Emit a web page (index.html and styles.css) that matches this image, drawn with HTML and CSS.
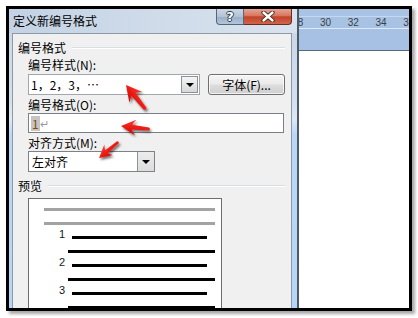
FILE: index.html
```html
<!DOCTYPE html>
<html lang="zh-CN">
<head>
  <meta charset="UTF-8" />
  <title>定义新编号格式</title>
  <link rel="stylesheet" href="styles.css">
</head>
<body>

<div class="shot">
  <div class="dialog">
    <div class="titlebar">
      <span class="title">定义新编号格式</span>
      <div class="caps">
        <span class="cap help">?</span>
        <span class="cap close">
          <svg width="14" height="11" viewBox="0 0 14 11">
            <path d="M2.5 1.5 L11.5 9.5 M11.5 1.5 L2.5 9.5" stroke="#3a2520" stroke-width="4.2" stroke-linecap="round"/>
            <path d="M2.5 1.5 L11.5 9.5 M11.5 1.5 L2.5 9.5" stroke="#fff" stroke-width="2.4" stroke-linecap="round"/>
          </svg>
        </span>
      </div>
    </div>

    <div class="client">
      <div class="group-title">编号格式</div>
      <div class="fields">
        <div class="label">编号样式(N):</div>
        <div class="row">
          <div class="combo style-combo">
            <span class="combo-text">1，2，3，…</span>
            <span class="drop"></span>
          </div>
          <div class="btn">字体(F)...</div>
        </div>

        <div class="label">编号格式(O):</div>
        <div class="textbox"><span class="hl">1</span><span class="ret">↵</span></div>

        <div class="label">对齐方式(M):</div>
        <div class="combo align-combo">
          <span class="combo-text">左对齐</span>
          <span class="drop edge"></span>
        </div>
      </div>

      <div class="group-title preview-title">预览</div>
      <div class="preview">
        <div class="pv-line gray"></div>
        <div class="pv-line gray"></div>
        <div class="pv-row"><span class="pv-num">1</span><span class="pv-line first"></span></div>
        <div class="pv-line rest"></div>
        <div class="pv-row"><span class="pv-num">2</span><span class="pv-line first"></span></div>
        <div class="pv-line rest"></div>
        <div class="pv-row"><span class="pv-num">3</span><span class="pv-line first"></span></div>
        <div class="pv-line rest"></div>
      </div>
    </div>
  </div>

  <div class="word">
    <div class="ruler-top"></div>
    <div class="ruler">
      <span>28</span><span>30</span><span>32</span><span>34</span><span>36</span>
    </div>
    <div class="ruler-bottom"></div>
    <div class="page"></div>
  </div>
</div>

<!-- 红色标注箭头 -->
<svg class="marks" width="418" height="318" viewBox="0 0 418 318">
  <defs>
    <filter id="shadow" x="-50%" y="-50%" width="200%" height="200%">
      <feDropShadow dx="1.5" dy="2" stdDeviation="1.3" flood-color="#000" flood-opacity="0.55"/>
    </filter>
    <linearGradient id="red" x1="0" y1="0" x2="0" y2="1">
      <stop offset="0" stop-color="#ff3a2a"/>
      <stop offset="1" stop-color="#d80000"/>
    </linearGradient>
    <path id="arrow" d="M0,0 L15,-8 Q12,-4.2 11.5,-2.4 L29,-1.5 Q31,0 29,1.7 L11.5,2.4 Q12,4.2 15,8 Z"/>
  </defs>
  <g filter="url(#shadow)" fill="url(#red)">
    <use href="#arrow" transform="translate(126 85) rotate(51) scale(1.05)"/>
    <use href="#arrow" transform="translate(121 126) rotate(6) scale(0.97)"/>
    <use href="#arrow" transform="translate(99 158) rotate(-40) scale(0.85)"/>
  </g>
</svg>

</body>
</html>
```

FILE: styles.css
```css
* {
  box-sizing: border-box;
}
body {
  margin: 0;
  position: relative;
  width: 418px;
  height: 318px;
  overflow: hidden;
  background: #fff;
  font-family: "Noto Sans CJK SC", "Liberation Sans", sans-serif;
  font-size: 12px;
  color: #000;
}

/* 截图外框 */
.shot {
  margin: 6px 0 0 6px;
  width: 406px;
  height: 305px;
  border: 3px solid #000;
  box-shadow: 3px 3px 3px rgba(0,0,0,0.35);
  display: flex;
  overflow: hidden;
}

/* 对话框 */
.dialog {
  width: 288px;
  flex: none;
  display: flex;
  flex-direction: column;
  padding: 0 5px 0 3px;
  background: linear-gradient(180deg, #c7d5e6 0, #d3dfec 90px, #dce8f4 110px, #b9d8f7 125px, #b6d6f7 100%);
}
.titlebar {
  height: 24px;
  flex: none;
  display: flex;
  align-items: center;
  background: linear-gradient(90deg, #c3d2e4 0, #cfdbe9 50%, #d9e3ef 100%);
  margin: 0 -5px 0 -3px;
  padding-left: 4px;
  padding-right: 5px;
}
.title {
  line-height: 14px;
}
.caps {
  margin-left: auto;
  align-self: flex-start;
  display: flex;
  height: 16px;
}
.cap {
  display: flex;
  align-items: center;
  justify-content: center;
  height: 16px;
}
.help {
  width: 28px;
  border: 1px solid #56667b;
  border-top: none;
  border-radius: 0 0 0 4px;
  background: linear-gradient(180deg, #cad6e4 0, #b3c3d6 50%, #98aec6 51%, #b2c5da 100%);
  font-family: "DejaVu Sans", sans-serif;
  font-weight: bold;
  font-size: 13px;
  color: #fff;
  text-shadow: 1px 0 0 #2d3b4d, -1px 0 0 #2d3b4d, 0 1px 0 #2d3b4d, 0 -1px 0 #2d3b4d;
}
.close {
  width: 48px;
  border: 1px solid #6e2c20;
  border-top: none;
  border-left: none;
  border-radius: 0 0 4px 0;
  background: linear-gradient(180deg, #e6a595 0, #d8765f 45%, #c2432a 52%, #d0644a 100%);
}

/* 客户区 */
.client {
  flex: 1;
  background: #f0f0f0;
  border: 1px solid #8e99a7;
  border-bottom: none;
  padding: 7px 6px 0 5px;
  overflow: hidden;
}
.group-title {
  display: flex;
  align-items: center;
  gap: 6px;
  line-height: 14px;
}
.group-title::after {
  content: "";
  flex: 1;
  border-top: 1px solid #d5dfe5;
  border-bottom: 1px solid #fff;
}
.fields {
  padding-left: 10px;
}
.label {
  margin-top: 3px;
  line-height: 14px;
}
.row {
  display: flex;
  gap: 8px;
  margin-top: 2px;
}
.combo {
  height: 21px;
  display: flex;
  align-items: center;
  background: #fff;
  border: 1px solid #a2a7ae;
  padding: 0 1px 0 2px;
}
.style-combo {
  width: 172px;
}
.combo-text {
  flex: 1;
  line-height: 14px;
}
.drop {
  width: 17px;
  height: 17px;
  border: 1px solid #8d9299;
  background: linear-gradient(180deg, #f6f6f6 0, #e6e6e6 50%, #d8d8d8 100%);
  position: relative;
}
.drop::after {
  content: "";
  position: absolute;
  left: 4px;
  top: 6px;
  border-left: 4px solid transparent;
  border-right: 4px solid transparent;
  border-top: 4px solid #000;
}
.btn {
  width: 77px;
  height: 21px;
  border: 1px solid #707070;
  border-radius: 3px;
  background: linear-gradient(180deg, #f4f4f4 0, #ebebeb 48%, #dddddd 52%, #cfcfcf 100%);
  box-shadow: inset 0 0 0 1px rgba(255,255,255,0.7);
  display: flex;
  align-items: center;
  justify-content: center;
  line-height: 14px;
}
.textbox {
  margin-top: 1px;
  width: 256px;
  height: 20px;
  border: 1px solid #7b8088;
  background: #fff;
  display: flex;
  align-items: center;
  padding-left: 2px;
  line-height: 15px;
}
.hl {
  background: #c4c4c4;
  color: #8e4a00;
  padding: 0 1px;
}
.ret {
  color: #9a9a9a;
  font-size: 11px;
}
.align-combo {
  margin-top: 1px;
  width: 127px;
  border-color: #7d8188;
  padding: 0 0 0 3px;
}
.drop.edge {
  height: 19px;
  width: 17px;
  border: none;
  border-left: 1px solid #8d9299;
  background: linear-gradient(180deg, #ececec 0, #dcdcdc 100%);
}
.drop.edge::after {
  left: 4px;
  top: 8px;
}

/* 预览 */
.preview-title {
  margin-top: 7px;
}
.preview {
  margin: 5px 0 0 10px;
  width: 194px;
  height: 140px;
  border: 1px solid #6e6e6e;
  border-bottom: none;
  background: #fff;
  display: flex;
  flex-direction: column;
  gap: 11px;
  padding-top: 9px;
}
.pv-line {
  height: 3px;
  background: #000;
  flex: none;
}
.pv-line.gray {
  margin-left: 15px;
  width: 171px;
  background: #a3a3a3;
}
.pv-row {
  display: flex;
  align-items: flex-end;
  height: 9px;
  margin-top: -6px;
}
.pv-num {
  width: 36px;
  text-align: right;
  font-family: "Liberation Sans", sans-serif;
  font-size: 11px;
  line-height: 9px;
  color: #101828;
}
.pv-line.first {
  margin-left: 7px;
  width: 135px;
}
.pv-line.rest {
  margin-left: 39px;
  width: 147px;
}

/* Word 窗口 */
.word {
  flex: 1;
  display: flex;
  flex-direction: column;
  border-left: 2px solid #4e5a68;
}
.ruler-top {
  height: 7px;
  background: #a8c3e4;
}
.ruler {
  height: 13px;
  display: flex;
  background: #a7c2e3;
  border-top: 1px solid #c6d8ef;
  border-bottom: 1px solid #dfe9f6;
  overflow: hidden;
  font-family: "Liberation Sans", sans-serif;
  font-size: 10px;
  line-height: 11px;
  color: #3a3f46;
}
.ruler span {
  flex: none;
  width: 27.75px;
  text-align: center;
}
.ruler span:first-child {
  margin-left: -15px;
}
.ruler-bottom {
  height: 22px;
  background: #a6c1e3;
  border-bottom: 1px solid #5b6878;
}
.page {
  flex: 1;
  background: #fff;
}

/* 标注 */
.marks {
  position: absolute;
  left: 0;
  top: 0;
}
```
